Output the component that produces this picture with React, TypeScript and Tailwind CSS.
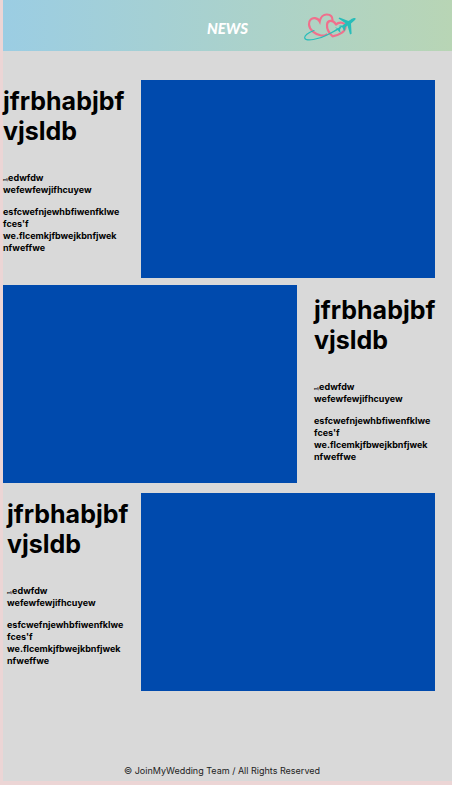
import type { ReactNode } from "react";

function Logo() {
  return (
    <svg viewBox="0 0 52 30" className="h-[30px] w-[52px]" fill="none" role="img" aria-label="JoinMyWedding">
      <path
        d="M22.500 21.500C21 22.700 19 22.800 17 22.500C11 21.500 5.500 17 5 11.500C4.600 7 8 4.700 11 5.200C13 5.500 14.800 6.600 15.700 8.500C16.500 4 19.500 1.300 23 1.500C26.500 1.700 28.500 3.800 28.500 7"
        stroke="#f0708c" strokeWidth="2.200" strokeLinecap="round"
      />
      <path
        d="M28.500 23.300C25 20 22.700 16 23 12C23.200 7.500 28.500 5.800 32 11.500C35 8.500 41.500 9 41.500 14C41.500 18.500 35.500 22 28.500 23.300Z"
        stroke="#f0708c" strokeWidth="2.200" strokeLinejoin="round"
      />
      <path
        d="M10 17.500C4 19.500 0 23 0.800 25.200C2 28.500 15 26.500 23 22C28 19.500 33 17 36 14.500"
        stroke="#29bdb9" strokeWidth="1.200" strokeLinecap="round"
      />
      <path d="M31 14L34 15.500L38 13L36 16.500L36.500 20L33.500 17L30 18L32.800 15.800Z" fill="#29bdb9" />
      <path
        d="M51.500 5.200C51 4.500 48.500 5 46.800 6.400L44.500 8L35.500 4.500L34.500 5.500L41.500 10.300L38.500 12.600L35.700 12.400L35 13.200L38.500 14.600L40 18L41 17.300L41.500 14.300L43.500 12.500L46 21.500L47.600 20.700L47 10.500L49.300 8.500C51 7 52 6 51.500 5.200Z"
        fill="#29bdb9"
      />
    </svg>
  );
}

function Photo() {
  return <div className="aspect-[294/198] min-w-0 flex-1 bg-[#004aad]" />;
}

function Story() {
  return (
    <div className="w-[124px] shrink-0 text-black">
      <h2 className="text-[25px] leading-[30px] font-bold">
        jfrbhabjbf
        <br />
        vjsldb
      </h2>
      <p className="mt-[26px] text-[9px] leading-3 font-bold">
        <span className="text-[3px] leading-none">erfj</span>edwfdw
        <br />
        wefewfewjifhcuyew
      </p>
      <p className="mt-[10px] text-[9px] leading-3 font-bold">
        esfcwefnjewhbfiwenfklwe
        <br />
        fces'f
        <br />
        we.flcemkjfbwejkbnfjwek
        <br />
        nfweffwe
      </p>
    </div>
  );
}

function Row({ className, children }: { className: string; children: ReactNode }) {
  return <article className={`flex items-start ${className}`}>{children}</article>;
}

export default function App() {
  return (
    <div className="flex min-h-screen flex-col border-b-4 border-l-[3px] border-[#ecd5d5] bg-[#d9d9d9] font-['Inter',sans-serif]">
      <header className="grid h-[51px] grid-cols-[1fr_auto_1fr] items-center bg-linear-to-r from-[#9bcde3] to-[#b8d5b5]">
        <nav className="col-start-2 pt-1">
          <a href="#news" className="font-['Lato',sans-serif] text-[15px] font-black text-white italic">
            NEWS
          </a>
        </nav>
        <div className="pt-1 pl-14">
          <Logo />
        </div>
      </header>
      <main className="flex-1 pt-[29px]">
        <Row className="gap-[14px] pr-[17px]">
          <div className="pt-[6px]">
            <Story />
          </div>
          <Photo />
        </Row>
        <Row className="mt-[7px] gap-[17px] pr-[14px]">
          <Photo />
          <div className="pt-[10px]">
            <Story />
          </div>
        </Row>
        <Row className="mt-[10px] gap-[10px] pr-[17px] pl-1">
          <div className="pt-[6px]">
            <Story />
          </div>
          <Photo />
        </Row>
      </main>
      <footer className="pr-[11px] pb-[4px] text-center text-[9px] leading-3 text-[#222]">
        © JoinMyWedding Team / All Rights Reserved
      </footer>
    </div>
  );
}
